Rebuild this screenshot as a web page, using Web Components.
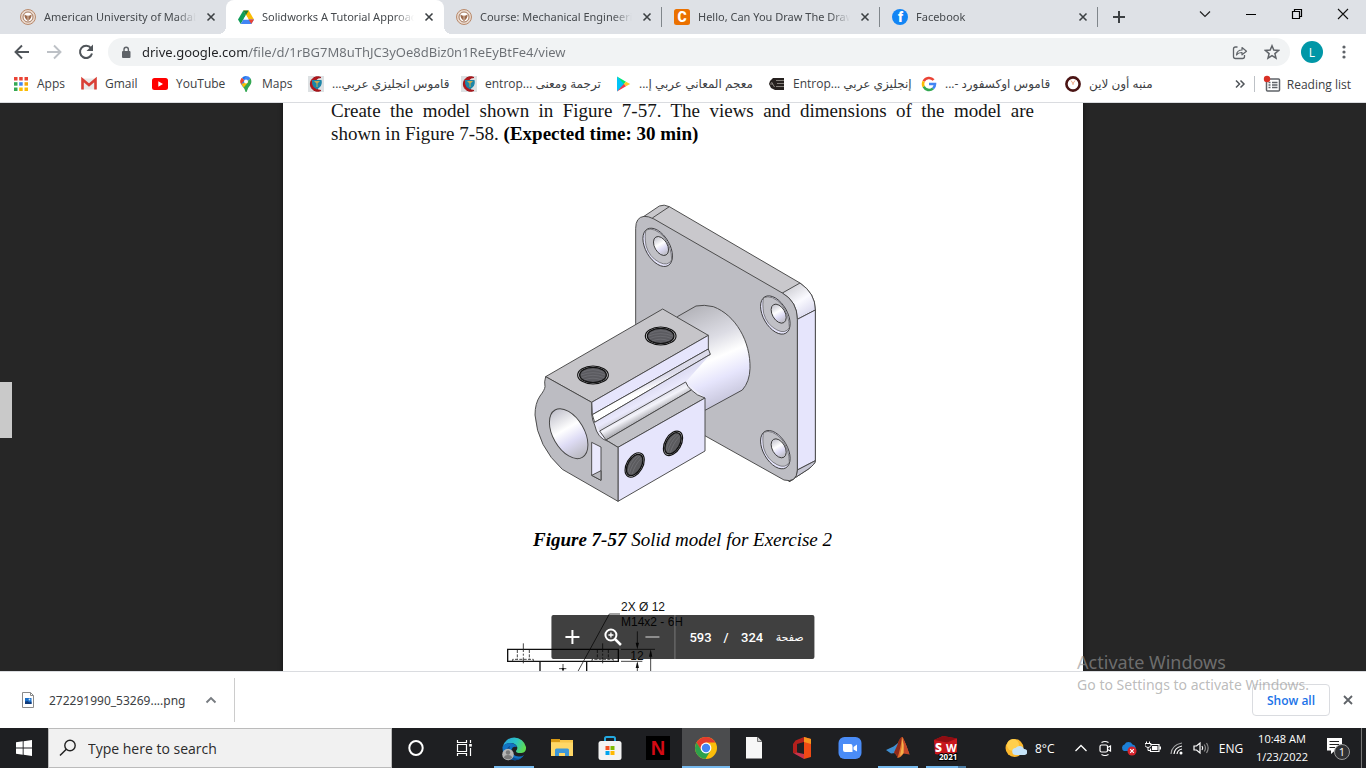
<!DOCTYPE html>
<html lang="en">
<head>
<meta charset="utf-8">
<title>Solidworks A Tutorial Approach</title>
<style>
html,body{margin:0;height:100%}
body{font-family:"Open Sans","Noto Sans","DejaVu Sans",sans-serif;font-size:12px;color:#3c4043;overflow:hidden}
</style>
</head>
<body>
<desktop-screen></desktop-screen>
<script>
const seal = `<circle cx="8" cy="8" r="7.5" fill="#e9d9ce" stroke="#b98a6c"/><circle cx="8" cy="8" r="5" fill="#fff" stroke="#a5785c"/><path d="M4.500 5.500Q8 8 11.500 5.500Q12 9 8 12Q4 9 4.500 5.500Z" fill="#9c6a4c"/><path d="M8 6v5" stroke="#e9d9ce" stroke-width=".8"/>`;
const crest = `<rect width="16" height="16" fill="#dde1e3"/><path d="M13 1.500A7.300 7.300 0 1 0 13 14.500A6.300 6.300 0 1 1 13 1.500Z" fill="#b3161b" stroke="#a01318" stroke-width="1"/><path d="M4 4h9.500q1 4-1.500 7L9 13.500 5.500 11Q3.500 8 4 4Z" fill="#1c86a8"/><path d="M6 5h6L9.500 7.500V11h-1V7.500Z" fill="#c9a94f"/>`;
const ICONS = {
  seal:[16,seal], crest:[16,crest],
  close:[16,`<path d="M4 4l8 8M12 4l-8 8" stroke="currentColor" stroke-width="1.800"/>`],
  drive:[16,`<path d="M5.300 1.500h5.400L16 10.500h-5.400z" fill="#fbbc04"/><path d="M5.300 1.500L8 6 2.700 15 0 10.500z" fill="#0f9d58"/><path d="M5.400 10.500H16L13.300 15H2.700z" fill="#4285f4"/><path d="M5.300 1.500h5.400L8 6z" fill="#188038"/><path d="M10.600 10.500H16L13.300 15z" fill="#ea4335"/><path d="M8 6l2.600 4.500H5.400z" fill="#fff"/>`],
  chegg:[16,`<rect width="16" height="16" rx="2.500" fill="#eb7100"/><text x="8" y="13" text-anchor="middle" font-family="Roboto" font-weight="900" font-size="14" fill="#fff">C</text>`],
  facebook:[16,`<circle cx="8" cy="8" r="8" fill="#1285f5"/><text x="8.500" y="13" text-anchor="middle" font-family="Roboto" font-weight="900" font-size="14" fill="#fff">f</text>`],
  plus:[16,`<path d="M8 2v12M2 8h12" stroke="#3c4043" stroke-width="2"/>`],
  chev:[12,`<path d="M1 3.500l5 5 5-5" fill="none" stroke="#222" stroke-width="1.200"/>`],
  minim:[12,`<path d="M1 6.500h10" stroke="#000"/>`],
  restore:[12,`<path d="M1.500 3.500h7v7h-7zM3.500 3.500v-2h7v7h-2" fill="none" stroke="#000" stroke-width="1.200"/>`],
  wclose:[12,`<path d="M1 1l10 10M11 1L1 11" stroke="#111" stroke-width="1.100"/>`],
  back:[16,`<path d="M15 8H2M8 1.500L1.500 8 8 14.500" fill="none" stroke="#50555a" stroke-width="1.900"/>`],
  fwd:[16,`<path d="M1 8h13M8 1.500L14.500 8 8 14.500" fill="none" stroke="#bdc1c6" stroke-width="1.900"/>`],
  reload:[16,`<path d="M13 4.200A6.100 6.100 0 1 0 14 9.500" fill="none" stroke="#50555a" stroke-width="2"/><path d="M15 .5v6.500H8.500z" fill="#50555a"/>`],
  lock:[12,`<rect x="2" y="5" width="8.500" height="7" rx="1" fill="#5f6368"/><path d="M4 5.500V3.400a2.200 2.200 0 0 1 4.400 0V5.500" fill="none" stroke="#5f6368" stroke-width="1.400"/>`],
  share:[16,`<path d="M5.500 3H3.500Q1.500 3 1.500 5v7.500q0 2 2 2h7q2 0 2-2V11" fill="none" stroke="#5f6368" stroke-width="1.300"/><path d="M4.500 11Q5 6 10 6V3.500L14.500 7.200 10 10.800V8.500Q6.500 8.300 4.500 11Z" fill="none" stroke="#5f6368" stroke-width="1.200" stroke-linejoin="round"/>`],
  star:[16,`<path d="M8 1.800l1.800 4.300 4.700.4-3.600 3.100 1.100 4.600L8 11.700l-4 2.500 1.100-4.600L1.500 6.500l4.700-.4z" fill="none" stroke="#5f6368" stroke-width="1.500"/>`],
  dots:[16,`<g fill="#5f6368"><circle cx="8" cy="3" r="1.600"/><circle cx="8" cy="8" r="1.600"/><circle cx="8" cy="13" r="1.600"/></g>`],
  apps:[16,`<g><path d="M1 1h3.500v3.500H1zM6.200 1h3.500v3.500H6.200zM11.500 1H15v3.500h-3.500z" fill="#ea4335"/><path d="M1 6.200h3.500v3.500H1z" fill="#34a853"/><path d="M6.200 6.200h3.500v3.500H6.200z" fill="#4285f4"/><path d="M11.500 6.200H15v3.500h-3.500z" fill="#f5a50b"/><path d="M1 11.500h3.500V15H1z" fill="#34a853"/><path d="M6.200 11.500h3.500V15H6.200zM11.500 11.500H15V15h-3.500z" fill="#fbbc04"/></g>`],
  gmail:[16,`<rect x="1" y="2.500" width="14" height="11" fill="#e9e9e9"/><path d="M1.500 13.500V3.500L8 9l6.500-5.500v10" fill="none" stroke="#d93f35" stroke-width="2.600"/>`],
  youtube:[16,`<rect y="2" width="16" height="12" rx="2.500" fill="#f00"/><path d="M6.300 5.200v5.600L11 8z" fill="#fff"/>`],
  maps:[16,`<path d="M8 0a5.500 5.500 0 0 0-4.200 2L8 5.500z" fill="#1a73e8"/><path d="M3.800 2A5.500 5.500 0 0 0 3 8.200L8 5.500z" fill="#ea4335"/><path d="M8 0a5.500 5.500 0 0 1 4.500 2.300L4.700 10.800 3 8.200z" fill="#4285f4"/><path d="M3.800 2A5.500 5.500 0 0 0 3.200 8l3-3.500z" fill="#ea4335"/><path d="M12.500 2.300Q14.500 6 12 9.500 9.500 12 8.600 16H7.600Q7 13 4.700 10.500z" fill="#34a853"/><path d="M3.200 8l2.500 3.500 5-6z" fill="#fbbc04"/><circle cx="8" cy="5.500" r="2" fill="#fff"/>`],
  play:[16,`<path d="M2 .5L10 8l-8 7.500z" fill="#00c3f7"/><path d="M2 .5l9 5.200L8.800 8z" fill="#00e676"/><path d="M11 5.700L15.200 8 11 10.300 8.600 8z" fill="#ffca28"/><path d="M2 15.500l9-5.200L8.800 8z" fill="#f2384e"/>`],
  books:[16,`<path d="M4 2h11v12H6L2 12 0 8l1-3z" fill="#26211f"/><path d="M7 4.500h8M8 7.500h7M7 10.500h8M2.500 6l3 5M1 8h3" stroke="#a09a94" stroke-width=".8"/>`],
  google:[16,`<g fill="none" stroke-width="2.600"><path d="M12.600 4A6 6 0 0 0 2.700 5.300" stroke="#ea4335"/><path d="M2.700 5.300A6 6 0 0 0 2.700 10.700" stroke="#fbbc04"/><path d="M2.700 10.700A6 6 0 0 0 12 12.500" stroke="#34a853"/><path d="M12 12.500A6 6 0 0 0 14 8H8" stroke="#4285f4"/></g>`],
  alarm:[16,`<circle cx="8" cy="8" r="6.600" fill="#fff" stroke="#4a1414" stroke-width="2.600"/><path d="M6 4.500L8 7.500l2-3M8 7v2" stroke="#e8956c" stroke-width=".8" fill="none"/>`],
  more:[12,`<path d="M2 2.500L5.500 6 2 9.500M6.500 2.500L10 6 6.500 9.500" fill="none" stroke="#50555a" stroke-width="1.500"/>`],
  readlist:[18,`<rect x="3.500" y="4" width="13" height="12" rx="1" fill="none" stroke="#5f6368" stroke-width="1.500"/><path d="M5.500 7.500h2M5.500 10h2M5.500 12.500h2M9 7.500h5.500M9 10h5.500M9 12.500h5.500" stroke="#5f6368" stroke-width="1.300"/><circle cx="4" cy="4" r="3.200" fill="#d93025"/>`],
  pplus:[20,`<path d="M10 3v14M3 10h14" stroke="#fff" stroke-width="2"/>`],
  pzoom:[20,`<circle cx="8.500" cy="8" r="5.500" fill="none" stroke="#fff" stroke-width="2"/><path d="M12.500 12l6 6" stroke="#fff" stroke-width="2.500"/><path d="M8.500 5.500v5M6 8h5" stroke="#fff" stroke-width="1.300"/>`],
  pminus:[20,`<path d="M3 10h14" stroke="#8d8d8d" stroke-width="2"/>`],
  png:[16,`<path d="M2.500.5h8l3 3v12h-11z" fill="#fff" stroke="#8a8a8a"/><path d="M10.500.5v3h3" fill="none" stroke="#8a8a8a"/><path d="M5 6h6.500v6H5z" fill="#1a6fc9"/><path d="M5 12V9.500L7.500 9l2 1.500 2-1V12z" fill="#123a78"/><circle cx="9.500" cy="7.500" r=".9" fill="#cfe8ff"/>`],
  up:[12,`<path d="M1.500 8.500L6 4l4.500 4.500" fill="none" stroke="#777b80" stroke-width="1.900"/>`],
  win:[16,`<path d="M0 2.200L6.700 1.300V7.500H0zM7.600 1.200L16 0v7.500H7.600zM0 8.500h6.700v6.200L0 13.800zM7.600 8.500H16V16L7.600 14.800z" fill="#fff"/>`],
  search:[18,`<circle cx="11" cy="6.500" r="5.200" fill="none" stroke="#222" stroke-width="1.400"/><path d="M7.300 10.200L1 16.500" stroke="#222" stroke-width="1.500"/>`],
  cortana:[24,`<ellipse cx="12" cy="12" rx="6.700" ry="7" fill="none" stroke="#fff" stroke-width="2"/>`],
  taskview:[24,`<path d="M5.500 8.500h9v7h-9zM5.500 4v2.500h9V4M5.500 20v-2.500h9V20M18.500 4v3M18.500 12v8" fill="none" stroke="#fff" stroke-width="1.200"/><path d="M17.200 8h2.600v2.600h-2.600z" fill="#fff"/>`],
  edge:[26,`<defs><linearGradient id="a" x1="0" y1=".2" x2="1" y2=".5"><stop offset="0" stop-color="#2aa0e0"/><stop offset=".55" stop-color="#2cc4c4"/><stop offset="1" stop-color="#5fdc50"/></linearGradient></defs><path d="M1.500 12A12 12 0 0 1 25 12Q25.500 17 20.500 18 15 18.500 15 16q2-2 1-4.500Q14 7.500 9 8 3.500 8.500 1.500 12Z" fill="url(#a)"/><path d="M1.500 12Q4 8 9 8q5 0 7 4-4.500-1.500-5.500 3Q11 21 18 21.500q3 0 5-1.500Q19.500 26 12 25 1 23 1.500 12Z" fill="#1272c4"/><path d="M9 11Q7 18 12 22q4 3 8.500 1Q17 26 12 25 5 23 5 17 6 12 9 11Z" fill="#0c4c90"/><circle cx="7" cy="19.500" r="5.800" fill="#b5b5b5"/><circle cx="7" cy="17.500" r="2.200" fill="#7a7a7a"/><path d="M3 23q0-3 4-3t4 3q-4 2.500-8 0z" fill="#7a7a7a"/>`],
  explorer:[24,`<path d="M1 3h9v4H1z" fill="#d99a14"/><path d="M10 4h13v4H1V6h9z" fill="#f8c64a"/><path d="M1 6.500h22V20H1z" fill="#ffd766"/><path d="M5 20v-6q0-1.500 1.500-1.500h11q1.500 0 1.500 1.500v6h-4v-3H9v3z" fill="#3d97d8"/>`],
  store:[26,`<path d="M8 7V3.500Q8 2 9.500 2h7Q18 2 18 3.500V7" fill="none" stroke="#23a8e0" stroke-width="2"/><rect x="1.500" y="6" width="23" height="19" rx="2.500" fill="#f3f3f3"/><path d="M8.500 11h4v4h-4z" fill="#f25022"/><path d="M13.500 11h4v4h-4z" fill="#7fba00"/><path d="M8.500 16h4v4h-4z" fill="#00a4ef"/><path d="M13.500 16h4v4h-4z" fill="#ffb900"/>`],
  netflix:[24,`<rect width="24" height="24" fill="#000"/><text x="12" y="19" text-anchor="middle" font-family="Liberation Sans Narrow,Liberation Sans" font-weight="700" font-size="20" fill="#d30a14">N</text>`],
  chrome:[24,`<circle cx="12" cy="12" r="11" fill="#fbbd0a"/><path d="M2.500 6.500A11 11 0 0 1 21.500 6.500H12L7 14.500z" fill="#e33b2e"/><path d="M2.500 6.500A11 11 0 0 0 11.500 23L16.500 14.500 12 17 7.500 14.500z" fill="#2da14c"/><circle cx="12" cy="12" r="5.400" fill="#fff"/><circle cx="12" cy="12" r="4.200" fill="#4384f3"/>`],
  doc:[24,`<path d="M4 1h11.500l4.500 4.500V22.500H4z" fill="#f7f7f7"/><path d="M15.500 1v4.500H20" fill="#ccc" stroke="#777"/>`],
  office:[24,`<path d="M14 1l7 2v18l-7 2z" fill="#ee4a14"/><path d="M14 1l7 2v5l-7-2z" fill="#f7941e"/><path d="M14 1L5.500 4.500 3 8v9l4 1.500V8l7-2z" fill="#b3201c"/><path d="M4 17.500l3-1 7 1.500V23z" fill="#c8334c"/>`],
  zoomapp:[24,`<rect x=".5" y="1" width="23" height="22" rx="6" fill="#4a8cf7"/><path d="M5 8h7.500q2 0 2 2v6H7q-2 0-2-2zM15.500 11l3.500-2.500v7L15.500 13.500z" fill="#fff"/>`],
  matlab:[24,`<path d="M0 14l7.500-3.500L12 7l2 3-5 7-4 .5z" fill="#3f8fd2"/><path d="M12 7q3-6 4-6 1.500 0 7.500 17.500-3.500-3-6-1Q15 21.500 11.500 22 10.500 18 8 16.500 12 11 12 7z" fill="#e2702c"/><path d="M16 1q-3 1-4 6.500L8 16.500Q10.500 18 11.500 22 14.500 13 16 1z" fill="#8f2a1b"/><path d="M16 1q2.500 8 1.500 16.500l6 1Q17.500 1 16 1z" fill="#c4482a"/><path d="M16 1q.5 10-2 19 2-1 3.500-3Q18.500 9 16 1z" fill="#f4b04a"/>`],
  sw:[26,`<path d="M1 5l9-4 14 2.500V17l-8 5L2 19z" fill="#c8161d"/><path d="M1 5l9-4 14 2.500-10 4z" fill="#8f0d12"/><text x="2" y="17" font-family="Open Sans" font-weight="800" font-size="12" fill="#fff">S</text><text x="13" y="17" font-family="Open Sans" font-weight="700" font-size="11" fill="#fff">W</text><text x="6" y="25" font-family="Open Sans" font-weight="700" font-size="8" fill="#fff" stroke="#000" stroke-width="2" paint-order="stroke">2021</text>`],
  weather:[22,`<circle cx="9.500" cy="11" r="9" fill="#fbb72c"/><circle cx="8" cy="8" r="6" fill="#ffcf4d"/><path d="M11 18a3.500 3.500 0 0 1-.5-7 5 5 0 0 1 8.500 1 3 3 0 0 1 .5 6z" fill="#c5e3f8"/>`],
  tup:[16,`<path d="M2.500 11L8 5.500 13.500 11" fill="none" stroke="#fff" stroke-width="1.300"/>`],
  meet:[16,`<rect x="3" y="5" width="7.500" height="7" rx="1.500" fill="none" stroke="#fff" stroke-width="1.200"/><path d="M10.500 7.500l3-1.500v5l-3-1.500M4.500 2.500Q8 .5 11.500 2.500M4.500 14.500q3.500 2 7 0" fill="none" stroke="#fff" stroke-width="1.200"/>`],
  onedrive:[16,`<path d="M3 11a3.500 3.500 0 0 1 .5-6.500 4.500 4.500 0 0 1 8 0A3.500 3.500 0 0 1 13 11z" fill="#1c7fd6"/><circle cx="11" cy="11" r="4.500" fill="#d6232c"/><path d="M9.200 9.200l3.600 3.600M12.800 9.200l-3.600 3.600" stroke="#fff" stroke-width="1.200"/>`],
  battery:[16,`<path d="M5.500 4.500H14v7H5.500V8.500" fill="none" stroke="#fff" stroke-width="1.200"/><path d="M14.500 6.500h1.500v3h-1.500zM7 6h5.500v4H7z" fill="#fff"/><path d="M1.500 1.500v2M4.500 1.500v2M0 3.500h6v2Q5 7.500 3 7.500T0 5.500zM3 7.500v3h2" fill="none" stroke="#fff" stroke-width="1"/>`],
  wifi:[16,`<g fill="none" stroke="#fff" stroke-width="1.200"><path d="M2 14Q2.500 5 13 3" opacity=".6"/><path d="M5 14Q5.500 7.500 13 6"/><path d="M8 14Q8.500 10 13 9"/></g><circle cx="12" cy="13" r="1.500" fill="#fff"/>`],
  volume:[16,`<path d="M1 6h2.500L7 3v10L3.500 10H1z" fill="none" stroke="#fff" stroke-width="1.200"/><path d="M9 6q1.500 2 0 4" fill="none" stroke="#fff" stroke-width="1.200"/><path d="M11.200 4.500q2.500 3.500 0 7M13.500 3q3.300 5 0 10" fill="none" stroke="#8a8a8a" stroke-width="1.200"/>`],
  notif:[24,`<path d="M1 2h15v12.500H9L5 18v-3.500H1z" fill="#fff"/><path d="M3.500 5.500H13M3.500 8.500H13M3.500 11.500H9" stroke="#222" stroke-width="1.200"/><circle cx="16" cy="16" r="7.500" fill="#303134" stroke="#999" stroke-width="1"/><text x="16" y="20" text-anchor="middle" font-family="Open Sans" font-size="11" fill="#fff">1</text>`]
};

const RESET = `:host,*{box-sizing:border-box}button,input{font:inherit;color:inherit;border:0;padding:0;margin:0;background:none;outline:none}button{display:flex;align-items:center;justify-content:center}a{color:inherit;text-decoration:none}`;
function define(name, render){
  customElements.define(name, class extends HTMLElement{
    connectedCallback(){
      if(this.shadowRoot) return;
      const t = document.createElement('template');
      t.innerHTML = render(this);
      this.attachShadow({mode:'open'}).append(t.content.cloneNode(true));
    }
  });
}

define('ui-icon', el => {
  const [box, art] = ICONS[el.getAttribute('name')];
  const size = el.getAttribute('size') || box;
  return `<style>:host{display:block;flex:none;width:${size}px;height:${size}px}svg{display:block}</style>
  <svg width="${size}" height="${size}" viewBox="0 0 ${box} ${box}" aria-hidden="true">${art}</svg>`;
});

define('browser-tab', el => `<style>${RESET}
:host{display:flex;position:relative;flex:0 1 218px;min-width:0;align-items:center;padding:0 8px 0 12px;gap:8px}
:host([active]){background:#fff;border-radius:8px 8px 0 0}
:host([active])::before,:host([active])::after{content:"";position:absolute;bottom:0;width:8px;height:8px}
:host([active])::before{right:100%;background:radial-gradient(circle at 0 0,transparent 8px,#fff 8px)}
:host([active])::after{left:100%;background:radial-gradient(circle at 100% 0,transparent 8px,#fff 8px)}
:host([divided])::after{content:"";position:absolute;right:0;top:7px;height:20px;width:1px;background:#80868b}
.t{flex:1;min-width:0;overflow:hidden;white-space:nowrap;font-family:"Noto Sans",sans-serif;font-size:11px;line-height:20px;color:#45494d;-webkit-mask-image:linear-gradient(90deg,#000 calc(100% - 20px),transparent);mask-image:linear-gradient(90deg,#000 calc(100% - 20px),transparent)}
button{color:#3c4043;flex:none}
</style><ui-icon name="${el.getAttribute('icon')}"></ui-icon><span class="t"><slot></slot></span><button aria-label="Close tab"><ui-icon name="close" size="14"></ui-icon></button>`);

define('tab-strip', () => `<style>${RESET}
:host{display:flex;flex:none;height:34px;background:#dee1e6;padding-left:8px}
.new{width:42px}.win{display:flex;margin-left:auto;height:28px}.win button{width:46px}
</style>
<browser-tab icon="seal">American University of Madaba</browser-tab>
<browser-tab icon="drive" active>Solidworks A Tutorial Approach</browser-tab>
<browser-tab icon="seal" divided>Course: Mechanical Engineering</browser-tab>
<browser-tab icon="chegg" divided>Hello, Can You Draw The Drawing</browser-tab>
<browser-tab icon="facebook" divided>Facebook</browser-tab>
<button class="new" aria-label="New tab"><ui-icon name="plus" size="16"></ui-icon></button>
<div class="win"><button aria-label="Search tabs"><ui-icon name="chev"></ui-icon></button><button aria-label="Minimize"><ui-icon name="minim"></ui-icon></button><button aria-label="Restore"><ui-icon name="restore"></ui-icon></button><button aria-label="Close"><ui-icon name="wclose"></ui-icon></button></div>`);

define('nav-bar', () => `<style>${RESET}
:host{display:flex;flex:none;height:36px;align-items:center;background:#fff;padding:0 6px}
button{width:32px;height:28px;flex:none}
.omni{flex:1;display:flex;align-items:center;height:28px;margin:0 6px;background:#f1f3f4;border-radius:14px;padding:0 2px 0 12px;gap:10px}
input{flex:1;min-width:0;font-family:"Noto Sans",sans-serif;font-size:13px;line-height:20px;-webkit-text-fill-color:transparent;background:linear-gradient(90deg,#202124 var(--host-w),#6b6f74 var(--host-w));-webkit-background-clip:text;background-clip:text;--host-w:105px}
.acts{display:flex}
.av span{width:22px;height:22px;border-radius:50%;background:#0097a7;color:#fff;display:flex;align-items:center;justify-content:center}
</style>
<button aria-label="Back"><ui-icon name="back"></ui-icon></button><button aria-label="Forward"><ui-icon name="fwd"></ui-icon></button><button aria-label="Reload"><ui-icon name="reload"></ui-icon></button>
<div class="omni"><ui-icon name="lock"></ui-icon><input aria-label="Address" value="drive.google.com/file/d/1rBG7M8uThJC3yOe8dBiz0n1ReEyBtFe4/view"><div class="acts"><button aria-label="Share"><ui-icon name="share"></ui-icon></button><button aria-label="Bookmark"><ui-icon name="star"></ui-icon></button></div></div>
<button class="av" aria-label="Profile"><span>L</span></button><button aria-label="Menu"><ui-icon name="dots" size="16"></ui-icon></button>`);

define('book-mark', el => `<style>${RESET}
:host{display:block;min-width:0;white-space:nowrap;line-height:20px}
a{display:flex;align-items:center;gap:8px}
</style><a href="#"><ui-icon name="${el.getAttribute('icon')}"></ui-icon><slot></slot></a>`);

define('bookmarks-bar', () => `<style>${RESET}
:host{display:flex;flex:none;height:33px;align-items:center;background:#fff;border-bottom:1px solid #dadce0;padding:0 15px 4px 13px}
.g{display:grid;grid-template-columns:68px 71px 86px 70px 153px 154px 154px 152px 144px auto;flex:1;align-items:center}
.r{display:flex;align-items:center;gap:8px}.r i{width:1px;height:16px;background:#bdc1c6}.r button{gap:6px}
.ar{font-family:"DejaVu Sans","Noto Sans",sans-serif}
.mix{font-family:"Open Sans","DejaVu Sans",sans-serif}
</style>
<div class="g">
<book-mark icon="apps">Apps</book-mark><book-mark icon="gmail">Gmail</book-mark><book-mark icon="youtube">YouTube</book-mark><book-mark icon="maps">Maps</book-mark>
<book-mark icon="crest"><span class="ar mix" dir="rtl">قاموس انجليزي عربي...</span></book-mark>
<book-mark icon="crest"><span class="ar mix" dir="rtl">ترجمة ومعنى entrop...&lrm;</span></book-mark>
<book-mark icon="play"><span class="ar mix" dir="rtl">معجم المعاني عربي إ...</span></book-mark>
<book-mark icon="books"><span class="ar mix" dir="rtl">إنجليزي عربي Entrop...&lrm;</span></book-mark>
<book-mark icon="google"><span class="ar mix" dir="rtl">قاموس اوكسفورد -...</span></book-mark>
<book-mark icon="alarm"><span class="ar mix" dir="rtl">منبه أون لاين</span></book-mark>
</div>
<div class="r"><button aria-label="More bookmarks"><ui-icon name="more"></ui-icon></button><i></i><button><ui-icon name="readlist"></ui-icon>Reading list</button></div>`);

define('solid-model', () => `<style>:host{display:block}svg{display:block;margin:0 auto}</style>
<svg width="310" height="330" viewBox="22 0 930 990" role="img" aria-label="Solid model">
<defs>
<linearGradient id="cyl" gradientUnits="userSpaceOnUse" x1="520" y1="350" x2="640" y2="630"><stop offset="0" stop-color="#b4b4ba"/><stop offset=".35" stop-color="#dcdce4"/><stop offset=".55" stop-color="#fff"/><stop offset=".75" stop-color="#e6e5fc"/><stop offset="1" stop-color="#c4c3d8"/></linearGradient>
<linearGradient id="bore" x1="0" y1="0" x2="1" y2="0"><stop offset="0" stop-color="#c2c2cc"/><stop offset=".4" stop-color="#fff"/><stop offset=".65" stop-color="#dedcf5"/><stop offset="1" stop-color="#b8b8be"/></linearGradient>
<linearGradient id="corner" x1="0" y1="0" x2=".6" y2="1"><stop offset="0" stop-color="#c0c0c6"/><stop offset=".6" stop-color="#fafaff"/><stop offset="1" stop-color="#d9d8ee"/></linearGradient>
<linearGradient id="groove" gradientUnits="userSpaceOnUse" x1="360" y1="615" x2="378" y2="650"><stop offset="0" stop-color="#dfdef4"/><stop offset=".6" stop-color="#eae9fc"/><stop offset="1" stop-color="#d4d4e0"/></linearGradient>
<linearGradient id="strip" gradientUnits="userSpaceOnUse" x1="380" y1="575" x2="388" y2="598"><stop offset="0" stop-color="#dcdbea"/><stop offset="1" stop-color="#fff"/></linearGradient>
<linearGradient id="fil" gradientUnits="userSpaceOnUse" x1="368" y1="648" x2="383" y2="676"><stop offset="0" stop-color="#e4e4ee"/><stop offset=".35" stop-color="#f4f4fa"/><stop offset="1" stop-color="#b4b4ba"/></linearGradient>
<g id="cb"><ellipse rx="63" ry="36" transform="rotate(60)" fill="#e6e5fc" stroke="#333" stroke-width="2.500"/><path d="M-35-52Q-10-63 20-30 42 0 42 38 30 58 5 45 -25 30 -35-5 -40-35 -35-52Z" fill="#c0c0c6" stroke="#444" stroke-width="1.800"/><ellipse cx="10" cy="-4" rx="31" ry="19" transform="rotate(60 10 -4)" fill="url(#bore)" stroke="#333" stroke-width="2.500"/></g>
<g id="th"><ellipse rx="46" ry="27" fill="#dcdce0" stroke="#111" stroke-width="3.500"/><ellipse rx="40" ry="23" fill="#5b5b60" stroke="#111" stroke-width="4"/><path d="M-32-8Q0-24 32-8M-36 0Q0-14 36 0M-34 8Q0-6 34 8M-26 15Q0 4 26 15" fill="none" stroke="#7c7c82" stroke-width="1.500"/></g>
<g id="ts"><g transform="rotate(-60)"><ellipse rx="40" ry="24" fill="#dcdce0" stroke="#111" stroke-width="3.500"/><ellipse rx="35" ry="20" fill="#5b5b5e" stroke="#111" stroke-width="4"/><path d="M-28-7Q0-18 28-7M-32 0Q0-10 32 0M-28 7Q0 0 28 7" fill="none" stroke="#7c7c82" stroke-width="1.500"/></g></g>
</defs>
<g stroke="#444" stroke-width="2.800" stroke-linejoin="round">
<path d="M370 79L416 48Q430 42 446 50L838 279Q884 310 884 360V812Q884 822 862 838L805 875 700 700 500 300Z" fill="#c9c8cc"/>
<path d="M785 309L838 279Q884 310 884 360L830 388Q830 335 785 309Z" fill="url(#corner)"/>
<path d="M830 388L884 360V812L830 840Z" fill="#e6e5fc"/>
<path d="M830 840L884 812Q884 822 862 838L805 875Q828 868 830 840Z" fill="#c6c6d4"/>
<path d="M345 400V115Q345 82 370 79 382 78 400 87L785 309Q830 335 830 388V840Q828 880 790 870L540 730 345 600Z" fill="#bdbdc3"/>
<path d="M395 84L446 50" fill="none"/>
<path d="M470 380L526 348Q550 343 578 350C645 375 690 455 688 535Q687 575 665 600L555 660 400 600Z" fill="url(#cyl)"/>
<path d="M213 690L568 485V560L553 660 237 780Z" fill="#eeedfa" stroke="none"/>
<path d="M553 500L620 430 640 600 553 657 553 624 495 576Z" fill="url(#cyl)" stroke="none"/>
<path d="M75 560L426 357 563 436 213 637Z" fill="#c6c5c9"/>
<path d="M213 637L563 436V477L215 674Z" fill="#e6e5fc"/>
<path d="M215 674L563 477 569 493 222 697Z" fill="url(#strip)"/>
<path d="M222 697L569 493 495 576 237 723Z" fill="url(#groove)" stroke="none"/><path d="M222 697L569 493" fill="none"/>
<path d="M237 723L495 576Q500 590 512 600L256 750Z" fill="url(#fil)"/>
<path d="M256 750L512 600Q528 617 553 624L292 772Z" fill="#c0c0c5"/>
<path d="M292 772L553 624V783L292 934Z" fill="#e6e5fc"/>
<path d="M75 560L213 637V672Q215 692 222 705 230 745 262 754L292 772V934L125 838Q50 770 43 675 43 640 58 618 72 600 73 590 70 576 75 560Z" fill="#bcbcc2"/>
<ellipse cx="144" cy="731" rx="82" ry="47" transform="rotate(60 144 731)" fill="url(#bore)"/>
<path d="M213 757L241 771V871L213 856Z" fill="#eae9fd"/><path d="M213 856L241 842V871Z" fill="#b8b8be"/>
</g>
<use href="#cb" x="411" y="172"/><use href="#cb" x="764" y="375"/><use href="#cb" x="764" y="779"/>
<use href="#th" x="217" y="555"/><use href="#th" x="420" y="438"/><use href="#ts" x="342" y="825"/><use href="#ts" x="457" y="760"/>
</svg>`);

define('dimension-drawing', () => `<style>:host{display:block}svg{display:block;margin:0 auto}</style>
<svg width="385" height="120" viewBox="0 0 1155 360" role="img" aria-label="Views and dimensions">
<g fill="none" stroke="#111" stroke-width="4"><path d="M53 178H385V214H53ZM150 214V360M290 214V360"/></g>
<g fill="none" stroke="#222" stroke-width="2.500"><path d="M390 72H358L230 306M393 178H495M393 214H457M442 124V170M442 220V243M482 185V360M219 222V240"/>
<path d="M100 160V220M338 160V220" stroke-dasharray="26 5 6 5"/><path d="M82 180V208M118 180V208M322 180V208M355 180V208M68 214V208H130V214M306 214V208H370V214M207 236H232" stroke-dasharray="9 4"/></g>
<path d="M442 178l-5-20h10zM442 214l-5 20h10zM482 178l-5 22h10zM219 246l-4-12h8z" fill="#111"/>
<g font-family="Liberation Sans,sans-serif" font-size="36" fill="#111"><text x="393" y="62">2X Ø 12</text><text x="393" y="107">M14x2 - 6H</text><text x="421" y="209">12</text></g>
</svg>`);

define('pdf-toolbar', () => `<style>${RESET}
:host{display:flex;align-items:center;height:44px;background:rgba(0,0,0,.75);border-radius:2px;padding:0 11px 0 1px;color:#fff;font:500 13px Roboto,"DejaVu Sans",sans-serif}
button{width:40px;height:44px}
.p{display:flex;align-items:center;align-self:stretch;border-left:1px solid #777;margin-left:2px;padding-left:14px;gap:12px}
input{width:23px;text-align:center}label{font-family:"DejaVu Sans",sans-serif;font-size:11px}
</style>
<button aria-label="Zoom in"><ui-icon name="pplus"></ui-icon></button><button aria-label="Fit"><ui-icon name="pzoom"></ui-icon></button><button aria-label="Zoom out"><ui-icon name="pminus"></ui-icon></button>
<div class="p"><span>593</span><span>/</span><input id="pg" value="324"><label for="pg" dir="rtl">صفحة</label></div>`);

define('pdf-viewer', () => `<style>${RESET}
:host{display:block;position:relative;flex:1;min-height:0;overflow:hidden;background:#262626}
.paper{max-width:800px;margin:-4px auto 0;padding:0 49px 0 48px;background:#fff;box-shadow:0 0 4px #111;color:#151515;font:19px/23px "Liberation Serif",serif}
p{margin:0}.full{display:block;text-align:justify;text-align-last:justify}
solid-model{margin-top:45px}
figcaption{text-align:center;font-style:italic;margin-top:8px;color:#000}figure{margin:0}
dimension-drawing{margin-top:39px}
pdf-toolbar{position:absolute;left:50%;bottom:12px;transform:translateX(-50%)}
.tab{position:absolute;left:0;top:279px;width:12px;height:56px;background:#c9c9c9}
b{color:#000}
</style>
<article class="paper"><p><span class="full">Create the model shown in Figure 7-57. The views and dimensions of the model are</span> shown in Figure 7-58. <b>(Expected time: 30 min)</b></p>
<figure><solid-model></solid-model><figcaption><b>Figure 7-57</b> Solid model for Exercise 2</figcaption></figure>
<dimension-drawing></dimension-drawing></article>
<button class="tab" aria-label="Open side panel"></button><pdf-toolbar></pdf-toolbar>`);

define('download-shelf', () => `<style>${RESET}
:host{display:flex;flex:none;height:57px;align-items:center;background:#fff;border-top:1px solid #dadce0;padding:0 10px 0 20px}
.f{gap:13px;font-family:"Noto Sans",sans-serif}.c{width:32px;margin-left:10px}
.s{width:1px;height:44px;background:#ccc;margin-left:7px}
.all{margin-left:auto;width:78px;height:32px;border:1px solid #dadce0;border-radius:4px;color:#1a73e8;font-weight:600}
.x{margin-left:10px;color:#5f6368}
</style>
<button class="f"><ui-icon name="png"></ui-icon><span>272291990_53269....png</span></button><button class="c" aria-label="Options"><ui-icon name="up"></ui-icon></button><div class="s"></div>
<button class="all">Show all</button><button class="x" aria-label="Close shelf"><ui-icon name="close"></ui-icon></button>`);

define('task-button', el => `<style>${RESET}
:host{display:block;width:48px;height:40px;flex:none;position:relative}
button{width:100%;height:100%}
:host([current]){background:#4b4c4e}
:host([open])::after,:host([current])::after{content:"";position:absolute;bottom:0;left:4px;right:4px;height:2px;background:#76b9ed}
:host([current])::after{left:0;right:0}
:host([group])::after{background:linear-gradient(90deg,#76b9ed 80%,#4b7ba3 80%)}
</style><button aria-label="${el.getAttribute('icon')}"><ui-icon name="${el.getAttribute('icon')}"></ui-icon></button>`);

define('task-bar', () => `<style>${RESET}
:host{display:flex;flex:none;height:40px;background:#1e1f22;color:#fff;align-items:center}
.search{display:flex;align-items:center;align-self:stretch;flex:0 1 344px;background:#f1f1f1;border:1px solid #bbb;color:#222;padding-left:10px;gap:11px}
.search input{flex:1;min-width:0;font-size:14px}.search input::placeholder{color:#2b2b2b;opacity:1}
.pins{display:flex;padding-left:2px}
.tray{display:flex;align-items:center;margin-left:auto;align-self:stretch}
.tray button{height:40px;width:24px}
.tray .w{width:56px;gap:8px;margin-right:8px;justify-content:flex-start;white-space:nowrap}
.tray .l{width:36px}.tray .k{width:66px;flex-direction:column;line-height:18px;font-size:11px}
.tray .n{width:46px}.end{width:5px;border-left:1px solid #777;align-self:stretch}
</style>
<task-button icon="win"></task-button>
<label class="search"><ui-icon name="search"></ui-icon><input aria-label="Search" placeholder="Type here to search"></label>
<task-button icon="cortana"></task-button><task-button icon="taskview"></task-button><div class="pins"><task-button icon="edge" open></task-button><task-button icon="explorer"></task-button><task-button icon="store"></task-button><task-button icon="netflix"></task-button><task-button icon="chrome" current></task-button><task-button icon="doc"></task-button><task-button icon="office"></task-button><task-button icon="zoomapp"></task-button><task-button icon="matlab" open></task-button><task-button icon="sw" open group></task-button></div>
<div class="tray"><button class="w"><ui-icon name="weather"></ui-icon>8°C</button>
<button aria-label="Hidden icons"><ui-icon name="tup"></ui-icon></button><button aria-label="Meet now"><ui-icon name="meet"></ui-icon></button><button aria-label="OneDrive"><ui-icon name="onedrive"></ui-icon></button><button aria-label="Battery"><ui-icon name="battery"></ui-icon></button><button aria-label="Network"><ui-icon name="wifi"></ui-icon></button><button aria-label="Volume"><ui-icon name="volume"></ui-icon></button>
<button class="l">ENG</button><button class="k"><span>10:48 AM</span><span>1/23/2022</span></button><button class="n" aria-label="Notifications"><ui-icon name="notif"></ui-icon></button><div class="end"></div></div>`);

define('activation-note', () => `<style>
:host{position:absolute;right:57px;bottom:72px;pointer-events:none;color:rgba(150,150,150,.65);white-space:nowrap;font-family:"Noto Sans",sans-serif}
p{margin:0;font-size:18px;line-height:24px}p+p{font-size:14px;line-height:22px}
</style><p>Activate Windows</p><p>Go to Settings to activate Windows.</p>`);

define('desktop-screen', () => `<style>:host{display:flex;flex-direction:column;height:100vh;position:relative}</style>
<tab-strip></tab-strip><nav-bar></nav-bar><bookmarks-bar></bookmarks-bar><pdf-viewer></pdf-viewer><download-shelf></download-shelf><task-bar></task-bar><activation-note></activation-note>`);
</script>
</body>
</html>
